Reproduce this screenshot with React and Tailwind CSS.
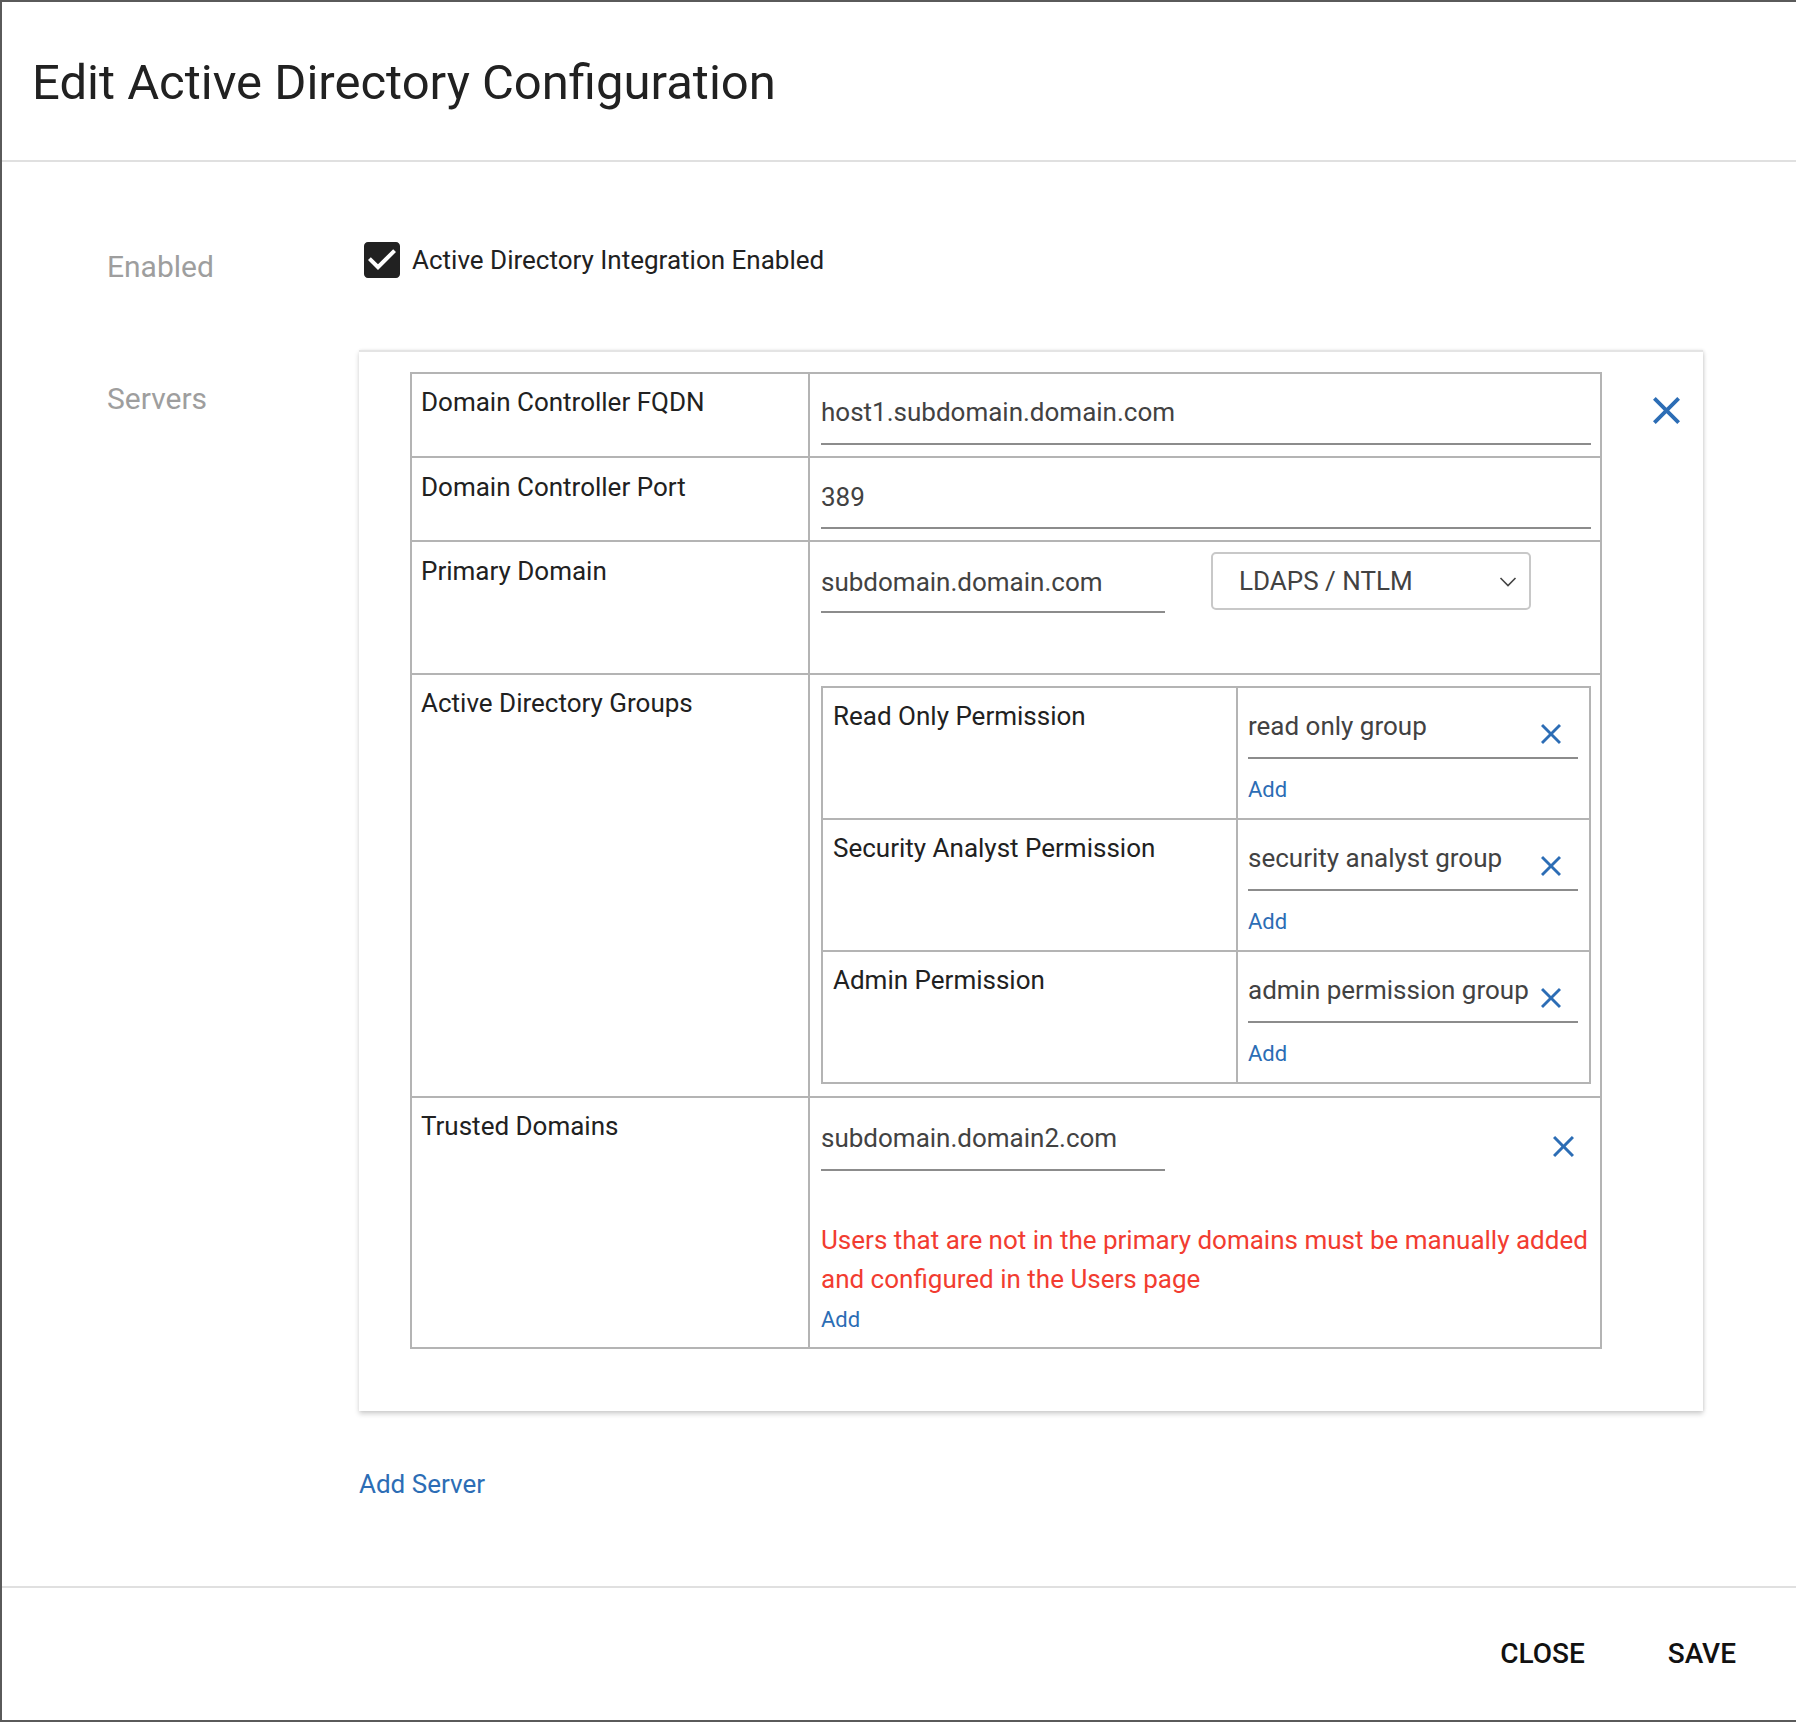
import React from "react";

const CloseIcon = ({ size, className }) => (
  <svg width={size} height={size} viewBox="5 5 14 14" className={className} fill="currentColor">
    <path d="M19 6.41L17.59 5 12 10.59 6.41 5 5 6.41 10.59 12 5 17.59 6.41 19 12 13.41 17.59 19 19 17.59 13.41 12z" />
  </svg>
);

const CheckBoxIcon = () => (
  <svg width="36" height="36" viewBox="3 3 18 18" fill="#212121">
    <path d="M19 3H5c-1.11 0-2 .9-2 2v14c0 1.1.89 2 2 2h14c1.11 0 2-.9 2-2V5c0-1.1-.89-2-2-2zm-9 14l-5-5 1.41-1.41L10 14.17l7.59-7.59L19 8l-9 9z" />
  </svg>
);

const Label = ({ children, pt = "pt-[9px]" }) => (
  <div className={`w-[398px] shrink-0 border-r-2 border-[#b4b4b4] pl-[9px] ${pt} text-[26px] leading-[39px] text-[#212121]`}>
    {children}
  </div>
);

const GroupRow = ({ label, value, last }) => (
  <div className={`flex ${last ? "" : "border-b-2 border-[#b4b4b4]"}`}>
    <div className="w-[415px] shrink-0 border-r-2 border-[#b4b4b4] pl-[10px] pt-[9px] text-[26px] leading-[39px] text-[#212121]">
      {label}
    </div>
    <div className="flex-1 pl-[10px] pr-[11px] pt-[19px] pb-[12px]">
      <div className="flex items-start border-b-2 border-[#8c8c8c] pb-[11px]">
        <div className="flex-1 text-[26px] leading-[39px] text-[#424242] whitespace-nowrap">{value}</div>
        <CloseIcon size={20} className="text-[#2c6db5] mt-[17px] mr-[17px] shrink-0" />
      </div>
      <div className="mt-[14px] text-[22px] leading-[33px] text-[#2c6db5]">Add</div>
    </div>
  </div>
);

export default function App() {
  return (
    <div className="w-[1796px] h-[1722px] bg-[#5a5a5a] pl-[2px] pt-[2px] pb-[2px] font-[Roboto,sans-serif] overflow-hidden">
      <div className="bg-white h-full flex flex-col">
        {/* Header */}
        <div className="pl-[30px] pt-[53px] pb-[49px] border-b-2 border-[#e0e0e0]">
          <h1 className="text-[49px] leading-[56px] text-[#212121] font-normal">Edit Active Directory Configuration</h1>
        </div>

        {/* Body */}
        <div className="flex-1 pl-[105px]">
          {/* Enabled */}
          <div className="flex items-start mt-[80px]">
            <div className="w-[252px] shrink-0 mt-[5px] text-[30px] leading-[40px] text-[#9e9e9e]">Enabled</div>
            <div className="flex items-center ml-[5px]">
              <CheckBoxIcon />
              <span className="ml-[12px] text-[26px] leading-[36px] text-[#212121]">Active Directory Integration Enabled</span>
            </div>
          </div>

          {/* Servers */}
          <div className="flex items-start mt-[63px]">
            <div className="w-[252px] shrink-0 mt-[29px] text-[30px] leading-[40px] text-[#9e9e9e]">Servers</div>
            <div>
              <div className="w-[1344px] bg-white flex pl-[51px] pt-[20px] pb-[62px] border-t-2 border-[#e4e4e4] shadow-[0_3px_5px_rgba(0,0,0,0.18),1px_0_3px_rgba(0,0,0,0.08)]">
                {/* Table */}
                <div className="w-[1192px] shrink-0 border-2 border-[#b4b4b4]">
                  {/* Row 1 */}
                  <div className="flex border-b-2 border-[#b4b4b4]">
                    <Label>Domain Controller FQDN</Label>
                    <div className="flex-1 pl-[11px] pr-[9px] pt-[19px] pb-[11px]">
                      <div className="border-b-2 border-[#8c8c8c] pb-[11px] text-[26px] leading-[39px] text-[#424242]">host1.subdomain.domain.com</div>
                    </div>
                  </div>
                  {/* Row 2 */}
                  <div className="flex border-b-2 border-[#b4b4b4]">
                    <Label pt="pt-[10px]">Domain Controller Port</Label>
                    <div className="flex-1 pl-[11px] pr-[9px] pt-[20px] pb-[11px]">
                      <div className="border-b-2 border-[#8c8c8c] pb-[10px] text-[26px] leading-[39px] text-[#424242]">389</div>
                    </div>
                  </div>
                  {/* Row 3 */}
                  <div className="flex border-b-2 border-[#b4b4b4]">
                    <Label pt="pt-[10px]">Primary Domain</Label>
                    <div className="flex-1 pl-[11px] pr-[9px] pb-[60px] flex items-start">
                      <div className="w-[344px] pt-[21px]">
                        <div className="border-b-2 border-[#8c8c8c] pb-[9px] text-[26px] leading-[39px] text-[#424242]">subdomain.domain.com</div>
                      </div>
                      <div className="ml-[46px] mt-[10px] w-[320px] h-[58px] border-2 border-[#c8c8c8] rounded-[5px] flex items-center pl-[26px] pr-[12px]">
                        <span className="flex-1 text-[26px] leading-[39px] text-[#424242]">LDAPS / NTLM</span>
                        <svg width="18" height="12" viewBox="0 0 18 12" className="mt-[2px]">
                          <polyline points="1.5,2 9,9.5 16.5,2" fill="none" stroke="#444" strokeWidth="1.6" />
                        </svg>
                      </div>
                    </div>
                  </div>
                  {/* Row 4 */}
                  <div className="flex border-b-2 border-[#b4b4b4]">
                    <Label>Active Directory Groups</Label>
                    <div className="flex-1 pl-[11px] pr-[9px] pt-[11px] pb-[12px]">
                      <div className="border-2 border-[#b4b4b4]">
                        <GroupRow label="Read Only Permission" value="read only group" />
                        <GroupRow label="Security Analyst Permission" value="security analyst group" />
                        <GroupRow label="Admin Permission" value="admin permission group" last />
                      </div>
                    </div>
                  </div>
                  {/* Row 5 */}
                  <div className="flex">
                    <Label>Trusted Domains</Label>
                    <div className="flex-1 pl-[11px] pr-[9px] pt-[21px] pb-[11px]">
                      <div className="flex items-start justify-between">
                        <div className="w-[344px] border-b-2 border-[#8c8c8c] pb-[11px] text-[26px] leading-[39px] text-[#424242]">subdomain.domain2.com</div>
                        <CloseIcon size={21} className="text-[#2c6db5] mt-[17px] mr-[17px] shrink-0" />
                      </div>
                      <div className="mt-[50px] text-[26px] leading-[39px] text-[#f23c30] whitespace-nowrap">
                        <div>Users that are not in the primary domains must be manually added</div>
                        <div>and configured in the Users page</div>
                      </div>
                      <div className="mt-[4px] text-[22px] leading-[33px] text-[#2c6db5]">Add</div>
                    </div>
                  </div>
                </div>
                {/* Remove server */}
                <CloseIcon size={27} className="text-[#2c6db5] ml-[51px] mt-[25px] shrink-0" />
              </div>
              <div className="mt-[54px] text-[26px] leading-[39px] text-[#2c6db5]">Add Server</div>
            </div>
          </div>
        </div>

        {/* Footer */}
        <div className="h-[134px] shrink-0 border-t-2 border-[#e0e0e0] flex items-center justify-end pr-[60px] gap-[83px]">
          <span className="text-[28px] leading-[40px] font-medium text-[#111]">CLOSE</span>
          <span className="text-[28px] leading-[40px] font-medium text-[#111]">SAVE</span>
        </div>
      </div>
    </div>
  );
}
